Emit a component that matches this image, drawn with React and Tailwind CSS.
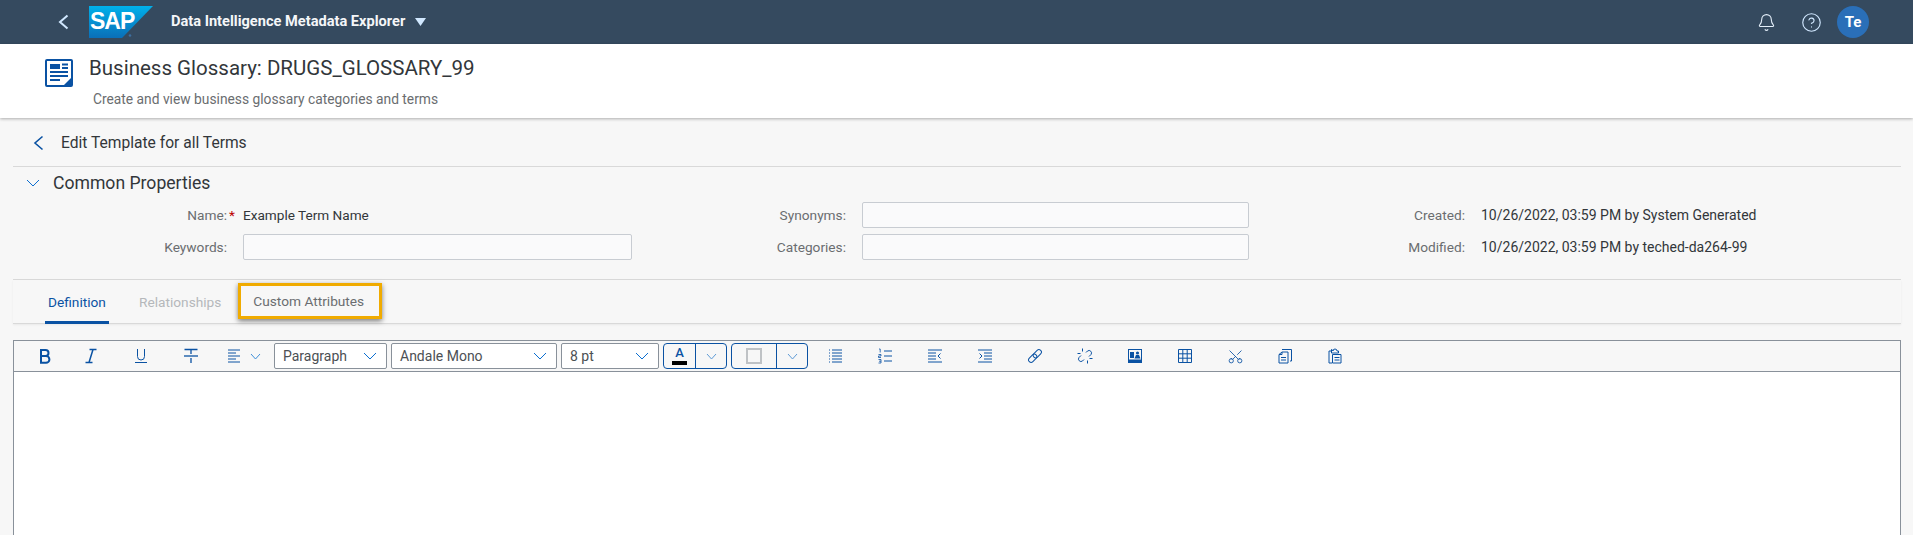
import React from 'react';
import { Bell, CircleHelp, Scissors } from 'lucide-react';

const BLUE = '#0a52a3';

const Chevron = ({ w = 12, h = 6, color = '#0a6ed1', sw = 1 }) => (
  <svg width={w + 2} height={h + 2} viewBox={`0 0 ${w + 2} ${h + 2}`} fill="none" stroke={color} strokeWidth={sw} className="shrink-0">
    <path d={`M1 1L${1 + w / 2} ${1 + h}L${1 + w} 1`} />
  </svg>
);

const BackArrow = ({ color, sw = 1.6 }) => (
  <svg width="11" height="16" viewBox="0 0 11 16" fill="none" stroke={color} strokeWidth={sw} className="shrink-0">
    <path d="M9.5 1.5L2 8l7.5 6.5" />
  </svg>
);

const Label = ({ children }) => (
  <div className="flex items-center justify-end text-[13.7px] text-[#6a6d70]">{children}</div>
);

const Box = () => <div className="h-[26px] border border-[#c8ccd2] bg-[#fafafb] rounded-[2px]" />;

const Select = ({ width, text }) => (
  <div className={`${width} h-[26px] flex items-center justify-between pl-[8px] pr-[9px] border border-[#89919a] rounded-[2px] bg-white text-[14px] text-[#4c5054] shrink-0`}>
    <span>{text}</span>
    <Chevron />
  </div>
);

const Tool = ({ width = 'w-[50px]', children }) => (
  <div className={`${width} h-[26px] flex items-center justify-center shrink-0`}>
    <svg width="16" height="16" viewBox="0 0 16 16" fill="none" stroke={BLUE} strokeWidth="1">
      {children}
    </svg>
  </div>
);

export default function App() {
  return (
    <div className="w-[1913px] h-[535px] overflow-hidden bg-[#f7f7f7] text-[#32363a] font-['Roboto',sans-serif]">
      {/* Shell bar */}
      <header className="h-[44px] bg-[#354a5f] flex items-center pl-[58px] pr-[44px] text-white">
        <BackArrow color="#d1e8ff" sw={2} />
        <svg width="64" height="32" viewBox="0 0 64 32" className="ml-[20px] shrink-0">
          <defs>
            <linearGradient id="sapg" x1="0" y1="0" x2="0" y2="1">
              <stop offset="0" stopColor="#00b0ea" />
              <stop offset="1" stopColor="#0a6fb8" />
            </linearGradient>
          </defs>
          <polygon points="0,0 64,0 33,32 0,32" fill="url(#sapg)" />
          <text x="1" y="23" fill="#fff" fontSize="23" fontWeight="700" fontFamily="Liberation Sans" letterSpacing="-1">SAP</text>
          <circle cx="41" cy="29.5" r="1.3" fill="#3d6f9f" />
        </svg>
        <span className="ml-[18px] text-[14.6px] font-bold text-[#f4f6f8]">Data Intelligence Metadata Explorer</span>
        <svg width="11" height="8" viewBox="0 0 11 8" className="ml-[10px]"><polygon points="0,0 11,0 5.5,8" fill="#d1e8ff" /></svg>
        <div className="ml-auto flex items-center">
          <Bell size={19} strokeWidth={1.4} className="text-[#e3eef9]" />
          <CircleHelp size={21} strokeWidth={1.3} className="ml-[25px] text-[#d1e8ff]" />
          <div className="ml-[15px] w-[32px] h-[32px] rounded-full bg-[#2a6fb8] flex items-center justify-center text-[15px] font-bold">Te</div>
        </div>
      </header>

      {/* Page title */}
      <div className="h-[74px] bg-white shadow-[0_1px_3px_rgba(0,0,0,0.3)] relative flex pl-[45px]">
        <svg width="28" height="28" viewBox="0 0 28 28" className="mt-[15px] shrink-0" fill="none" stroke={BLUE}>
          <rect x="1" y="1" width="26" height="26" rx="1" strokeWidth="2" />
          <path d="M5 5h10v5H5z" fill={BLUE} stroke="none" />
          <path d="M17 5.5h6M17 9h6M5 13h18M5 17h18M5 21h10" strokeWidth="2" />
          <path d="M19 26l7-7v7z" fill={BLUE} stroke="none" />
        </svg>
        <div className="ml-[16px] min-w-0">
          <h1 className="mt-[12px] text-[20.5px] leading-[24px] text-[#32363a]">Business Glossary: DRUGS_GLOSSARY_99</h1>
          <p className="mt-[10px] ml-[4px] text-[13.8px] leading-[18px] text-[#6a6d70]">Create and view business glossary categories and terms</p>
        </div>
      </div>

      {/* Back row */}
      <div className="ml-[13px] mr-[12px] h-[49px] border-b border-[#d9d9d9] flex items-center pl-[20px] pt-[2px]">
        <BackArrow color={BLUE} />
        <span className="ml-[17px] mt-[2px] text-[15.6px]">Edit Template for all Terms</span>
      </div>

      {/* Common properties */}
      <section className="ml-[13px] mr-[12px] h-[113px] border-b border-[#d9d9d9]">
        <div className="h-[32px] flex items-center pl-[13px]">
          <Chevron w={12} h={6} />
          <span className="ml-[13px] text-[17.6px] leading-[22px]">Common Properties</span>
        </div>
        <div className="mt-[3px] grid grid-cols-[214px_389px_198px_387px_200px_1fr] grid-rows-[26px_26px] gap-x-[16px] gap-y-[6px]">
          <Label>
            <span className="relative">Name:<span className="absolute left-full ml-[2px] text-[#bb0000]">*</span></span>
          </Label>
          <div className="flex items-center text-[13.6px]">Example Term Name</div>
          <Label>Synonyms:</Label>
          <Box />
          <Label>Created:</Label>
          <div className="flex items-center text-[14px]">10/26/2022, 03:59 PM by System Generated</div>

          <Label>Keywords:</Label>
          <Box />
          <Label>Categories:</Label>
          <Box />
          <Label>Modified:</Label>
          <div className="flex items-center text-[14px]">10/26/2022, 03:59 PM by teched-da264-99</div>
        </div>
      </section>

      {/* Tabs */}
      <nav className="ml-[13px] mr-[12px] h-[44px] border-b border-[#d9d9d9] shadow-[0_1px_2px_rgba(0,0,0,0.06)] flex pl-[32px] text-[13.7px]">
        <div className="w-[64px] h-[44px] border-b-[3px] border-[#0a52a3] flex items-center justify-center pt-[3px] text-[#0a52a3]">Definition</div>
        <div className="ml-[30px] h-[44px] flex items-center text-[#b5b8bb]">Relationships</div>
        <div className="ml-[17px] mt-[3px] w-[144px] h-[36px] border-[3px] border-[#f0ab00] shadow-[0_2px_5px_rgba(0,0,0,0.5)] flex items-center pl-[12px] text-[#6a6d70]">Custom Attributes</div>
      </nav>

      {/* Rich text editor */}
      <div className="ml-[13px] mr-[12px] mt-[16px] h-[300px] border border-[#89919a] bg-white">
        <div className="h-[31px] bg-[#f7f7f7] border-b border-[#89919a] flex items-center pl-[8px]">
          <Tool width="w-[46px]">
            <path d="M4 2h4.5a3 3 0 0 1 0 6H4zM4 8h5a3.4 3.4 0 0 1 0 6.8H4z" strokeWidth="2" />
          </Tool>
          <Tool width="w-[46px]">
            <path d="M6.5 1.5h7M2.5 14.5h7M10 1.5L6 14.5" strokeWidth="1.5" />
          </Tool>
          <Tool width="w-[54px]">
            <path d="M4.5 1v7.5a3.5 3.5 0 0 0 7 0V1M2 14.5h12" />
          </Tool>
          <Tool width="w-[46px]">
            <path d="M1.5 1.5h13M8 1.5v4.5M8 10v5" strokeWidth="1.3" />
            <path d="M1 8h14" strokeWidth="1.3" />
          </Tool>
          <div className="ml-[4px] flex items-center">
            <Tool width="w-[32px]">
              <path d="M2 2h12M2 5h8M2 8h12M2 11h8M2 14h12" />
            </Tool>
            <Chevron w={9} h={5} color="#3f8fd8" />
          </div>
          <div className="ml-[13px] flex gap-[4px]">
            <Select width="w-[113px]" text="Paragraph" />
            <Select width="w-[166px]" text="Andale Mono" />
            <Select width="w-[98px]" text="8 pt" />
            <div className="w-[64px] h-[26px] flex border border-[#0a52a3] rounded-[4px] shrink-0">
              <div className="w-[32px] border-r border-[#0a52a3] flex flex-col items-center pt-[2px]">
                <span className="text-[13px] leading-[14px] font-medium text-[#0a52a3]">A</span>
                <div className="w-[15px] h-[4px] bg-black mt-[1px]" />
              </div>
              <div className="flex-1 flex items-center justify-center"><Chevron w={9} h={5} color="#5f9bd6" /></div>
            </div>
            <div className="w-[77px] h-[26px] flex border border-[#0a52a3] rounded-[4px] shrink-0">
              <div className="w-[45px] border-r border-[#0a52a3] flex items-center justify-center">
                <div className="w-[16px] h-[16px] border-2 border-[#bfc2c5]" />
              </div>
              <div className="flex-1 flex items-center justify-center"><Chevron w={9} h={5} color="#5f9bd6" /></div>
            </div>
          </div>
          <div className="ml-[2px] flex items-center">
            <Tool>
              <path d="M2 2h1M5 2h10M2 5h1M5 5h10M2 8h1M5 8h10M2 11h1M5 11h10M2 14h1M5 14h10" />
            </Tool>
            <Tool>
              <path d="M7 3h8M7 8h8M7 13h8" />
              <path d="M2 1h1.2v3.5M1.5 6.5h2.5v1.5h-2.5v1.5h2.5M1.5 11.5h2.5v3.5h-2.5M2 13.2h2" strokeWidth="0.8" />
            </Tool>
            <Tool>
              <path d="M1 2h14M1 5h8M1 8h8M1 11h8M1 14h14M13.5 5.5L11 8l2.5 2.5" />
            </Tool>
            <Tool>
              <path d="M1 2h14M7 5h8M7 8h8M7 11h8M1 14h14M2.5 5.5L5 8l-2.5 2.5" />
            </Tool>
            <Tool>
              <g transform="rotate(-45 8 8)">
                <rect x="0" y="5.5" width="9.5" height="5" rx="2.5" />
                <rect x="6.5" y="5.5" width="9.5" height="5" rx="2.5" />
              </g>
            </Tool>
            <Tool>
              <path d="M9 4.5l1.5-1.5a2.5 2.5 0 0 1 3.5 3.5L12 8.5M7 11.5L5.5 13A2.5 2.5 0 0 1 2 9.500L4 7.500" />
              <path d="M5.500 0.500v3M0.500 5.500h3M12.500 10.500h3M10.500 12.500v3" />
            </Tool>
            <Tool>
              <path d="M1 1h14v14H1z" fill={BLUE} stroke="none" />
              <path d="M2 2h12v9.5H2z" fill="#f7f7f7" stroke="none" />
              <path d="M3 4h4v6H3z" fill={BLUE} stroke="none" />
              <circle cx="10.500" cy="5" r="1.6" fill={BLUE} stroke="none" />
              <path d="M7.500 10.500l1.500-3.500h3l1.500 3.500z" fill={BLUE} stroke="none" />
            </Tool>
            <Tool>
              <path d="M1.500 1.500h13v13h-13zM1.500 5.800h13M1.500 10.200h13M5.800 1.500v13M10.200 1.500v13" />
            </Tool>
            <div className="w-[50px] h-[26px] flex items-center justify-center shrink-0">
              <Scissors size={17} strokeWidth={1.2} color={BLUE} className="-rotate-90" />
            </div>
            <Tool>
              <path d="M5 1.500h9.500v11.500H13M2 6.500l3-2.500h6v11H2zM2 6.500h3V4M4 9.500h5M4 12h5" />
            </Tool>
            <Tool>
              <path d="M5 3H2v12h3M5 1.500h-.5V5h7V3H10a2 2 0 0 0-4 0z" />
              <path d="M5.500 6.500H14V15H5.500zM7.500 9.500h5M7.500 12h5" />
            </Tool>
          </div>
        </div>
      </div>
    </div>
  );
}
